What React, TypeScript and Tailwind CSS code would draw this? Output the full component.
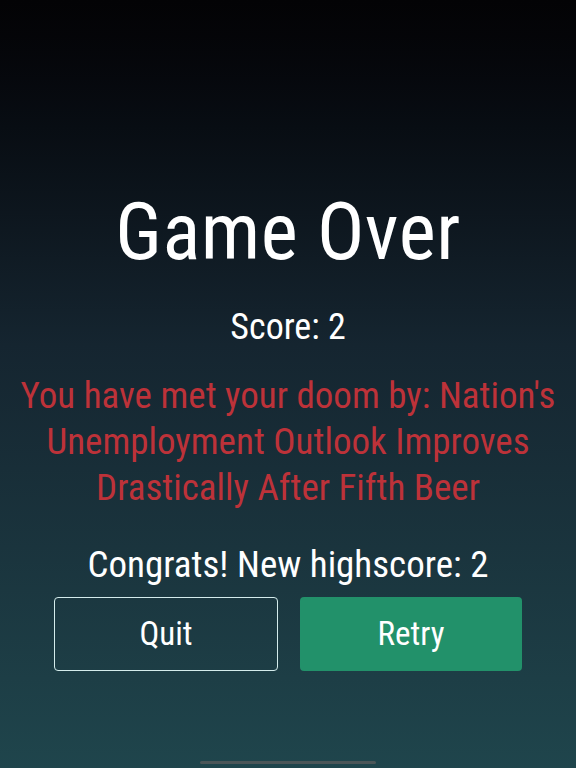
export default function App() {
  return (
    <div
      className="w-[576px] h-[768px] flex flex-col items-center bg-gradient-to-b from-[#030305] via-[#152530] via-45% to-[#1f454c] text-white overflow-hidden"
      style={{ fontFamily: "'Roboto Condensed', Roboto, 'Liberation Sans', sans-serif" }}
    >
      <div className="h-[186px] shrink-0" />
      {/* Title + score */}
      <h1 className="text-[79px] leading-[92px] font-normal font-stretch-condensed tracking-[0.5px]">
        Game Over
      </h1>
      <p className="mt-[27px] text-[36px] leading-[44px] font-stretch-condensed">Score: 2</p>

      {/* Cause of death */}
      <p className="mt-[24px] px-[14px] text-center text-[37px] leading-[46px] text-[#bd3239] font-stretch-condensed">
        You have met your doom by: Nation's Unemployment Outlook Improves Drastically After Fifth Beer
      </p>

      <p className="mt-[32px] text-[37px] leading-[44px] font-stretch-condensed">Congrats! New highscore: 2</p>

      {/* Buttons */}
      <div className="mt-[10px] w-[468px] flex gap-[22px]">
        <button className="flex-1 h-[74px] rounded-[4px] border border-[#d4ecec] text-[33px] font-stretch-condensed text-white">
          Quit
        </button>
        <button className="flex-1 h-[74px] rounded-[4px] bg-[#22916a] text-[33px] font-stretch-condensed text-white">
          Retry
        </button>
      </div>

      <div className="flex-1" />
      <div className="mb-[4px] w-[176px] h-[3px] rounded-full bg-[#4b5658]" />
    </div>
  );
}
